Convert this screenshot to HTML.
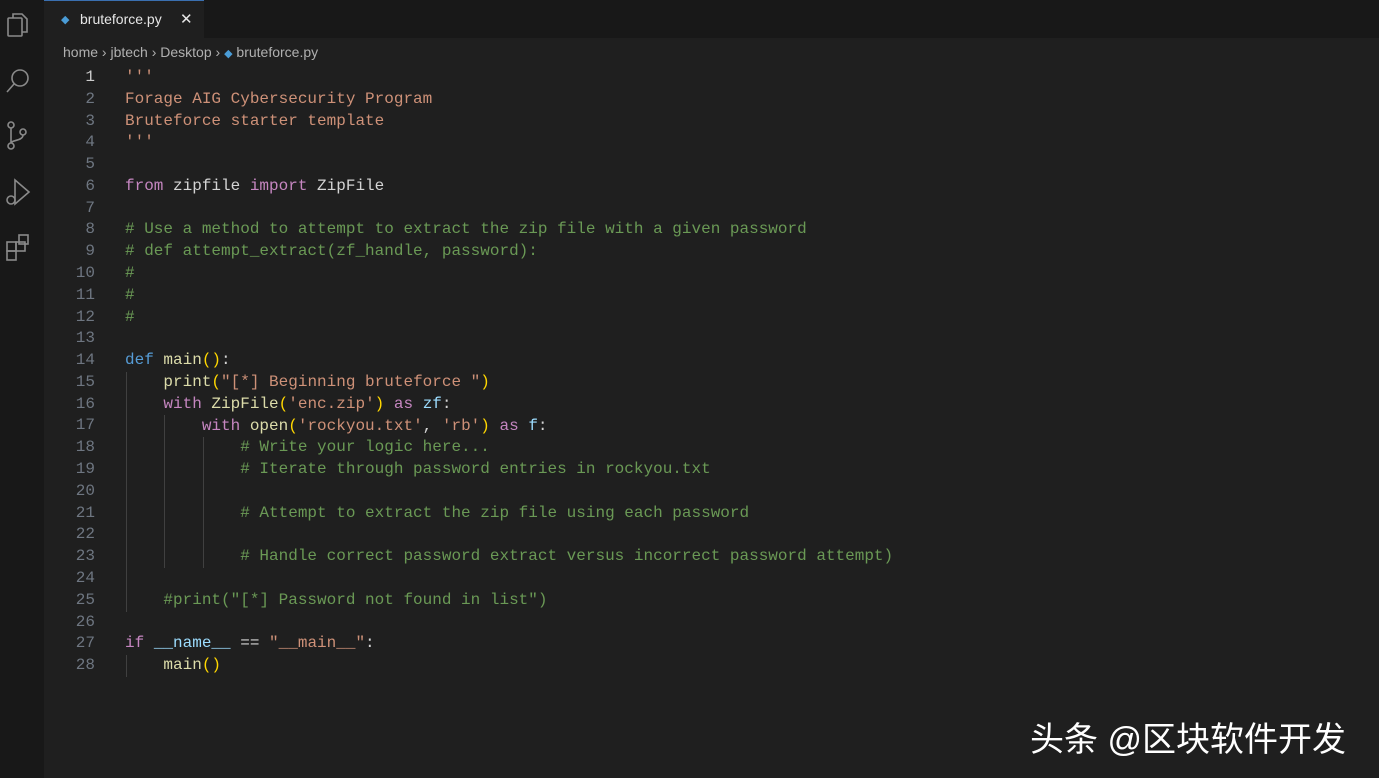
<!DOCTYPE html>
<html><head><meta charset="utf-8"><style>
body{margin:0;width:1379px;height:778px;background:#1f1f1f;overflow:hidden;position:relative;font-family:"Liberation Sans",sans-serif}
.act{position:absolute;left:0;top:0;width:44px;height:778px;background:#181818}
.tabbar{position:absolute;left:44px;top:0;right:0;height:38px;background:#181818}
.tab{position:absolute;left:44px;top:0;width:160px;height:38px;background:#1f1f1f;border-top:1px solid #3a6fb0;color:#e6e6e6;font-size:14px}
.crumb{position:absolute;left:63px;top:44px;color:#b0b0b0;font-size:14px}
.code{position:absolute;left:0;top:67px;font-family:"Liberation Mono",monospace;font-size:16px;line-height:21.78px;white-space:pre}
.ln{position:absolute;left:50px;width:45px;text-align:right;color:#6e7681}
.tx{position:absolute;left:125px;top:0;color:#d4d4d4}
.s{color:#ce9178}.k{color:#c586c0}.b{color:#569cd6}.c{color:#6a9955}.f{color:#dcdcaa}.v{color:#9cdcfe}.y{color:#ffd700}.g{color:#4ec9b0}
.guide{position:absolute;width:1px;background:#404040}
.wm{position:absolute;left:1030px;top:712px;color:#fff;font-family:"Liberation Sans","Noto Sans CJK SC",sans-serif;font-size:34px}
svg{position:absolute}
</style></head><body>
<div class="act"></div>
<svg style="left:5px;top:12px" width="30" height="250" fill="none" stroke="#8a8a8a" stroke-width="1.6">
<rect x="3" y="6" width="14" height="18" rx="1"/><path d="M8 6V2h9l5 5v13h-5"/>
<circle cx="15" cy="66" r="8"/><path d="M9 72l-7 8"/>
<circle cx="6" cy="113" r="3"/><circle cx="6" cy="134" r="3"/><circle cx="18" cy="120" r="3"/><path d="M6 116v15M18 123c0 6-12 5-12 8"/>
<path d="M10 168l14 12-14 12z"/><circle cx="6" cy="188" r="4"/>
<rect x="2" y="230" width="9" height="9"/><rect x="11" y="230" width="9" height="9"/><rect x="2" y="239" width="9" height="9"/><rect x="14" y="223" width="9" height="9"/>
</svg>
<div class="tabbar"></div>
<div class="tab"><span style="position:absolute;left:17px;top:12px;color:#4a9cd6;font-size:11px">◆</span><span style="position:absolute;left:36px;top:10px">bruteforce.py</span><span style="position:absolute;left:136px;top:9px;font-size:15px">✕</span></div>
<div class="crumb">home › jbtech › Desktop › <span style="color:#4a9cd6;font-size:11px">◆</span> bruteforce.py</div>
<div class="guide" style="left:126px;top:372px;height:240px"></div>
<div class="guide" style="left:126px;top:655px;height:22px"></div>
<div class="guide" style="left:164px;top:415px;height:153px"></div>
<div class="guide" style="left:203px;top:437px;height:131px"></div>
<div class="code"><div class="ln" style="top:0;color:#ccc">1</div><div class="ln" style="top:21.78px">2</div><div class="ln" style="top:43.56px">3</div><div class="ln" style="top:65.34px">4</div><div class="ln" style="top:87.12px">5</div><div class="ln" style="top:108.9px">6</div><div class="ln" style="top:130.68px">7</div><div class="ln" style="top:152.46px">8</div><div class="ln" style="top:174.24px">9</div><div class="ln" style="top:196.02px">10</div><div class="ln" style="top:217.8px">11</div><div class="ln" style="top:239.58px">12</div><div class="ln" style="top:261.36px">13</div><div class="ln" style="top:283.14px">14</div><div class="ln" style="top:304.92px">15</div><div class="ln" style="top:326.7px">16</div><div class="ln" style="top:348.48px">17</div><div class="ln" style="top:370.26px">18</div><div class="ln" style="top:392.04px">19</div><div class="ln" style="top:413.82px">20</div><div class="ln" style="top:435.6px">21</div><div class="ln" style="top:457.38px">22</div><div class="ln" style="top:479.16px">23</div><div class="ln" style="top:500.94px">24</div><div class="ln" style="top:522.72px">25</div><div class="ln" style="top:544.5px">26</div><div class="ln" style="top:566.28px">27</div><div class="ln" style="top:588.06px">28</div><div class="tx"><span class="s">'''
Forage AIG Cybersecurity Program
Bruteforce starter template
'''</span>

<span class="k">from</span> zipfile <span class="k">import</span> ZipFile

<span class="c"># Use a method to attempt to extract the zip file with a given password
# def attempt_extract(zf_handle, password):
#
#
#</span>

<span class="b">def</span> <span class="f">main</span><span class="y">()</span>:
    <span class="f">print</span><span class="y">(</span><span class="s">"[*] Beginning bruteforce "</span><span class="y">)</span>
    <span class="k">with</span> <span class="f">ZipFile</span><span class="y">(</span><span class="s">'enc.zip'</span><span class="y">)</span> <span class="k">as</span> <span class="v">zf</span>:
        <span class="k">with</span> <span class="f">open</span><span class="y">(</span><span class="s">'rockyou.txt'</span>, <span class="s">'rb'</span><span class="y">)</span> <span class="k">as</span> <span class="v">f</span>:
            <span class="c"># Write your logic here...
            # Iterate through password entries in rockyou.txt

            # Attempt to extract the zip file using each password

            # Handle correct password extract versus incorrect password attempt)</span>

    <span class="c">#print("[*] Password not found in list")</span>

<span class="k">if</span> <span class="v">__name__</span> == <span class="s">"__main__"</span>:
    <span class="f">main</span><span class="y">()</span></div></div>
<div class="wm">头条 @区块软件开发</div>
</body></html>
